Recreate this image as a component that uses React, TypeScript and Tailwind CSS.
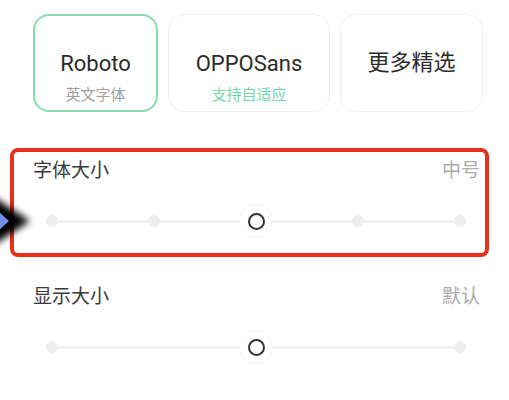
const cjk = "font-['Roboto','Noto_Sans_CJK_SC',sans-serif]";

type Card = { title: string; sub?: string; subColor?: string; active?: boolean; w: string };

const cards: Card[] = [
  { title: 'Roboto', sub: '英文字体', subColor: 'text-[#a0a0a0]', active: true, w: 'w-[125px]' },
  { title: 'OPPOSans', sub: '支持自适应', subColor: 'text-[#72d8a5]', w: 'w-[162px]' },
  { title: '更多精选', w: 'w-[143px]' },
];

const FontCard = ({ c }: { c: Card }) => (
  <div
    className={`${c.w} h-[98px] rounded-[16px] flex flex-col items-center bg-white ${
      c.active ? 'border-2 border-[#86dfae] pt-[34px]' : 'border border-[#eeeeee]'
    } ${c.sub && !c.active ? 'pt-[35px]' : ''} ${!c.sub ? 'justify-center' : ''}`}
  >
    <div className="text-[22px] leading-[28px] text-[#2b2b2b]">{c.title}</div>
    {c.sub && <div className={`text-[15px] leading-[20px] mt-[7px] ${c.subColor}`}>{c.sub}</div>}
  </div>
);

const Slider = ({ steps }: { steps: number }) => (
  <div className="relative h-[32px]">
    <div className="absolute left-[4px] right-[4px] top-[15px] h-[3px] bg-[#f1f1f1]" />
    <div className="absolute inset-0 flex items-center justify-between">
      {Array.from({ length: steps }).map((_, i) =>
        i === Math.floor(steps / 2) ? (
          <div
            key={i}
            className="w-[34px] h-[34px] -mx-[11px] rounded-full bg-white border border-[#f7f7f7] flex items-center justify-center"
          >
            <div className="w-[17px] h-[17px] rounded-full border-[2.5px] border-[#333333]" />
          </div>
        ) : (
          <div key={i} className="w-[12px] h-[12px] rounded-full bg-[#eeeeee]" />
        )
      )}
    </div>
  </div>
);

export default function App() {
  return (
    <div className={`relative w-[509px] h-[400px] bg-white overflow-hidden ${cjk}`}>
      <div className="flex gap-[10px] pl-[33px] pt-[14px]">
        {cards.map((c) => (
          <FontCard key={c.title} c={c} />
        ))}
      </div>

      <div className="ml-[10px] w-[479px] mt-[36px] h-[109px] border-4 border-[#ec2e1c] rounded-[8px] pt-[6px]">
        <div className="flex justify-between pl-[19px] pr-[5px] text-[19px] leading-[26px]">
          <span className="text-[#3a3a3a]">字体大小</span>
          <span className="text-[#ababab]">中号</span>
        </div>
        <div className="mt-[21px] ml-[32px] mr-[19px]">
          <Slider steps={5} />
        </div>
      </div>

      <div className="mt-[27px]">
        <div className="flex justify-between pl-[33px] pr-[29px] text-[19px] leading-[26px]">
          <span className="text-[#3a3a3a]">显示大小</span>
          <span className="text-[#ababab]">默认</span>
        </div>
        <div className="mt-[21px] ml-[46px] w-[420px]">
          <Slider steps={3} />
        </div>
      </div>

      <svg className="absolute left-0 top-[194px]" width="44" height="56" viewBox="0 0 44 56">
        <defs>
          <filter id="blur" x="-50%" y="-50%" width="200%" height="200%">
            <feGaussianBlur stdDeviation="3.5" />
          </filter>
        </defs>
        <polygon points="-8,2 30,27 -8,52" fill="#000" filter="url(#blur)" />
        <polygon points="-4,15 9,27 -4,39" fill="#6f8fe8" />
      </svg>
    </div>
  );
}
